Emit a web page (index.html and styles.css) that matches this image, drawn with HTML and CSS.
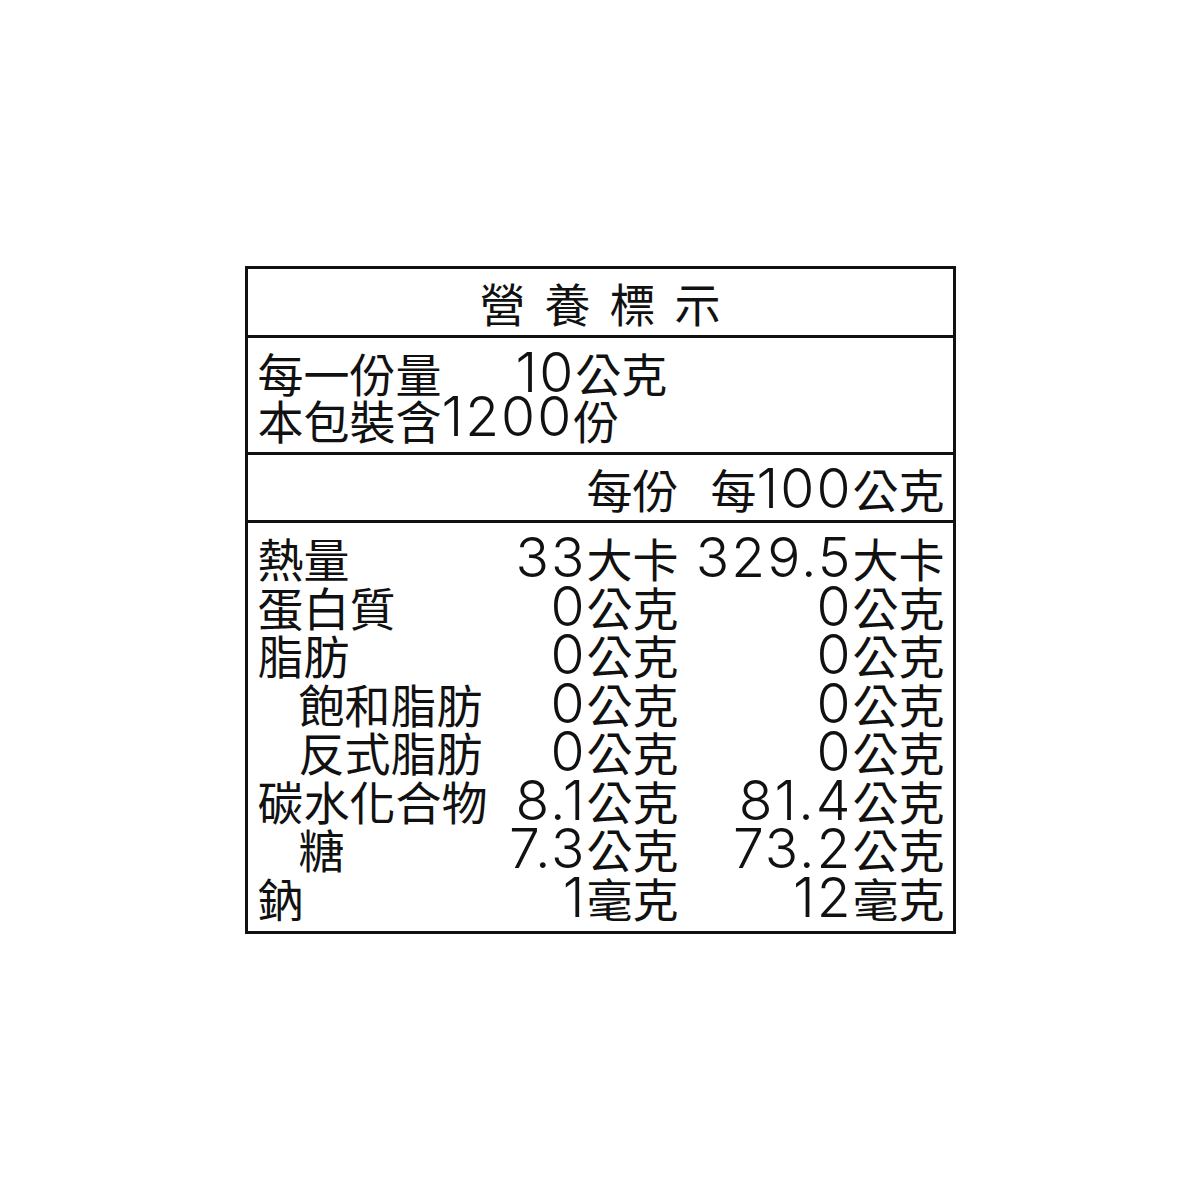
FILE: index.html
```html
<!DOCTYPE html>
<html lang="zh-Hant">
<head>
<meta charset="utf-8">
<title>營養標示</title>
<link rel="stylesheet" href="styles.css">
</head>
<body>
<div class="label">
  <div class="title">營養標示</div>
  <div class="serving">
    <div class="line"><span class="serving-key">每一份量</span><span><span class="n">10</span>公克</span></div>
    <div class="line">本包裝含<span class="n">1200</span>份</div>
  </div>
  <div class="grid head">
    <div></div>
    <div class="v">每份</div>
    <div class="v">每<span class="n">100</span>公克</div>
  </div>
  <div class="grid body">
    <div class="k">熱量</div><div class="v"><span class="n">33</span>大卡</div><div class="v"><span class="n">329.5</span>大卡</div>
    <div class="k">蛋白質</div><div class="v"><span class="n">0</span>公克</div><div class="v"><span class="n">0</span>公克</div>
    <div class="k">脂肪</div><div class="v"><span class="n">0</span>公克</div><div class="v"><span class="n">0</span>公克</div>
    <div class="k indent">飽和脂肪</div><div class="v"><span class="n">0</span>公克</div><div class="v"><span class="n">0</span>公克</div>
    <div class="k indent">反式脂肪</div><div class="v"><span class="n">0</span>公克</div><div class="v"><span class="n">0</span>公克</div>
    <div class="k">碳水化合物</div><div class="v"><span class="n">8.1</span>公克</div><div class="v"><span class="n">81.4</span>公克</div>
    <div class="k indent">糖</div><div class="v"><span class="n">7.3</span>公克</div><div class="v"><span class="n">73.2</span>公克</div>
    <div class="k">鈉</div><div class="v"><span class="n">1</span>毫克</div><div class="v"><span class="n">12</span>毫克</div>
  </div>
</div>
</body>
</html>
```
FILE: styles.css
```css
html, body {
  margin: 0;
  padding: 0;
  background: #fff;
}

.label {
  width: 711px;
  height: 668px;
  box-sizing: border-box;
  margin: 266px auto 0;
  border: 3px solid #111;
  display: flex;
  flex-direction: column;
  font-family: "Noto Sans CJK TC", "Noto Sans CJK SC", sans-serif;
  font-size: 46px;
  color: #111;
}

.n {
  font-family: Inter, "DejaVu Sans", sans-serif;
  font-weight: 350;
  font-size: 1.2em;
  letter-spacing: 2px;
  line-height: 40px;
}

.title {
  height: 69px;
  box-sizing: border-box;
  border-bottom: 3px solid #111;
  display: flex;
  align-items: center;
  justify-content: center;
  font-size: 46px;
  line-height: 1;
  letter-spacing: 19px;
  padding-left: 19px;
}

.serving {
  height: 117px;
  box-sizing: border-box;
  border-bottom: 3px solid #111;
  padding: 11px 10px 0;
  line-height: 47px;
}

.line {
  display: flex;
  white-space: nowrap;
}

.serving-key {
  width: 258px;
}

.grid {
  display: grid;
  grid-template-columns: 230px 191px 266px;
  padding: 0 8px 0 10px;
}

.head {
  height: 68px;
  box-sizing: border-box;
  border-bottom: 3px solid #111;
  align-content: center;
  line-height: 48px;
}

.body {
  flex: 1;
  padding-top: 10px;
  grid-auto-rows: 48.5px;
  line-height: 48.5px;
  align-content: start;
}

.k {
  white-space: nowrap;
}

.indent {
  padding-left: 41px;
}

.v {
  text-align: right;
  white-space: nowrap;
}
```
